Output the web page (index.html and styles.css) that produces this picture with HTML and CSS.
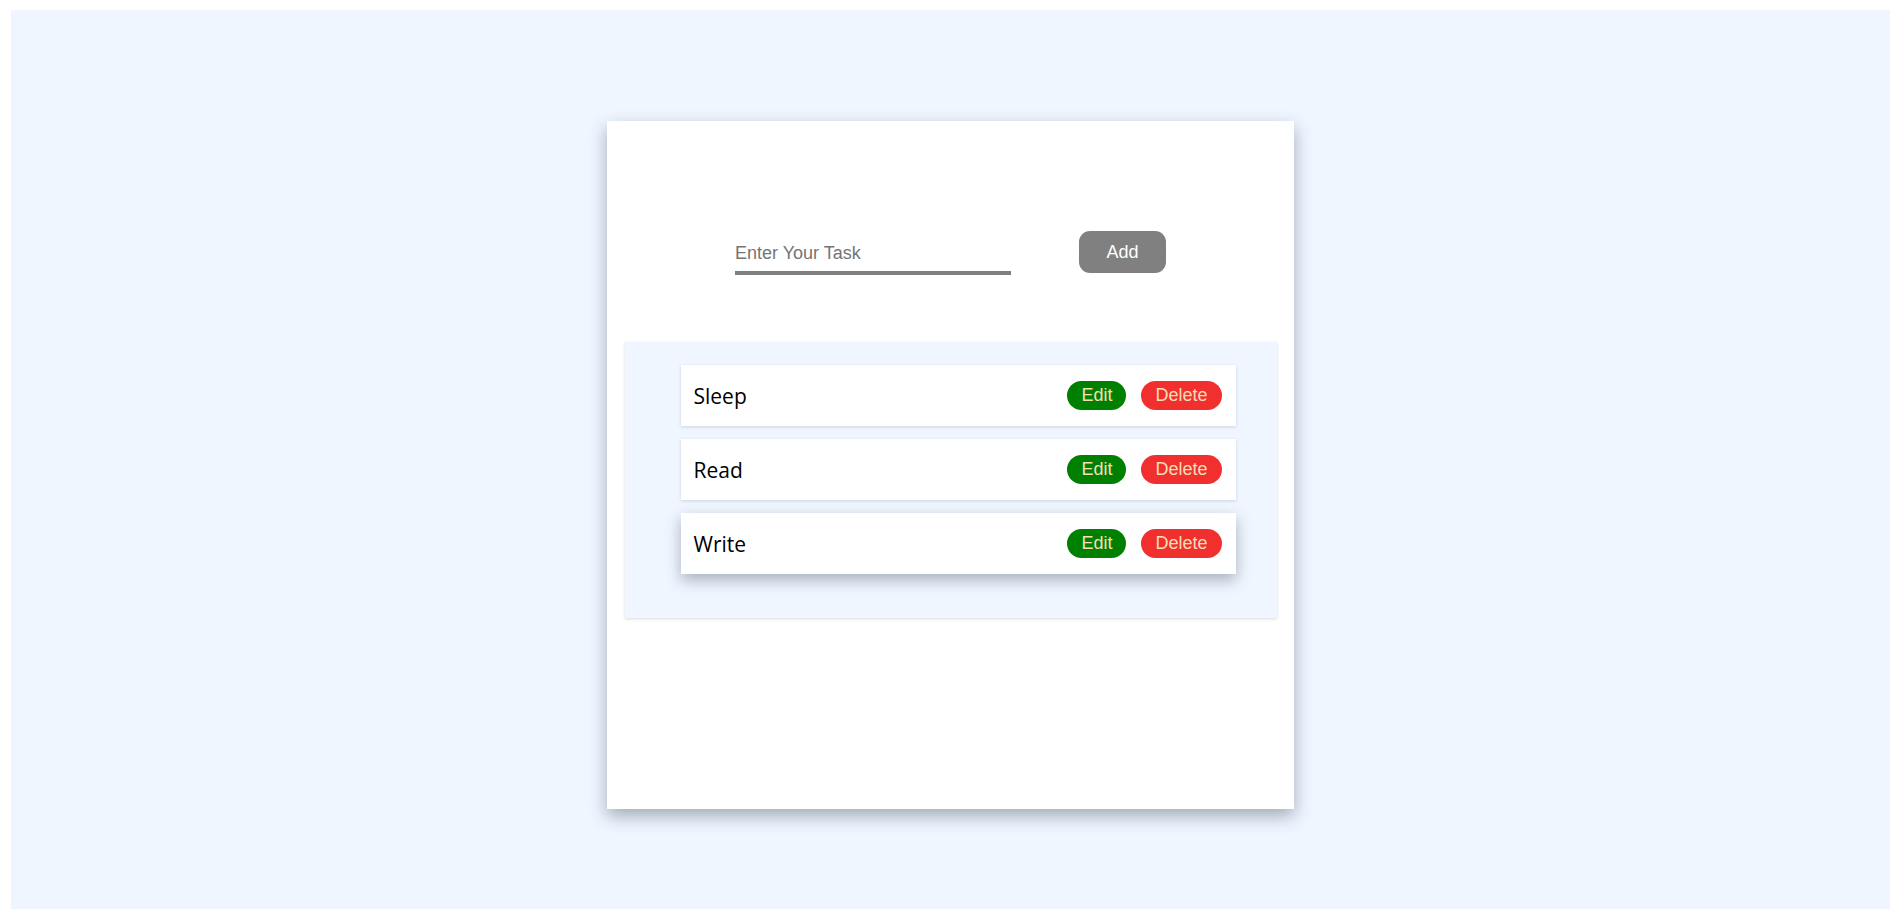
FILE: index.html
```html
<!DOCTYPE html>
<html lang="en">
<head>
<meta charset="utf-8">
<title>Todo</title>
<link rel="stylesheet" href="styles.css">
</head>
<body>
<div class="page">
  <div class="card">
    <div class="form-row">
      <input class="task-input" type="text" placeholder="Enter Your Task">
      <button class="add-btn">Add</button>
    </div>
    <ul class="list">
      <li class="item"><span class="item-text">Sleep</span><div class="actions"><button class="btn edit">Edit</button><button class="btn delete">Delete</button></div></li>
      <li class="item"><span class="item-text">Read</span><div class="actions"><button class="btn edit">Edit</button><button class="btn delete">Delete</button></div></li>
      <li class="item item-hover"><span class="item-text">Write</span><div class="actions"><button class="btn edit">Edit</button><button class="btn delete">Delete</button></div></li>
    </ul>
  </div>
</div>
</body>
</html>
```

FILE: styles.css
```css
html, body {
  margin: 0;
  padding: 0;
  background: #ffffff;
  overflow: hidden;
  height: 909px;
}

.page {
  margin: 10px 7px 0 11px;
  height: 920px;
  background: #eff6ff;
  padding-top: 111px;
  box-sizing: border-box;
}

.card {
  width: 687px;
  height: 688px;
  margin: 0 auto;
  background: #ffffff;
  box-shadow: 0 7px 16px rgba(40, 50, 70, 0.38);
  padding-top: 110px;
  box-sizing: border-box;
  display: flex;
  flex-direction: column;
  align-items: center;
}

.form-row {
  display: flex;
  align-items: center;
  gap: 68px;
  height: 42px;
}

.task-input {
  width: 276px;
  height: 45px;
  box-sizing: border-box;
  border: none;
  border-bottom: 4px solid #808080;
  outline: none;
  padding: 6px 0 0 0;
  margin: 0;
  font-family: "Liberation Sans", Arial, sans-serif;
  font-size: 18px;
  color: #333;
  background: transparent;
}

.task-input::placeholder {
  color: #757575;
}

.add-btn {
  width: 87px;
  height: 42px;
  border: none;
  border-radius: 11px;
  background: #808080;
  color: #ffffff;
  font-family: "Liberation Sans", Arial, sans-serif;
  font-size: 18px;
  padding: 0;
}

.list {
  list-style: none;
  margin: 69px 0 0 0;
  width: 652px;
  box-sizing: border-box;
  padding: 23px 41px 44px 56px;
  background: #eff6ff;
  box-shadow: 0 1px 3px rgba(0, 0, 0, 0.15);
  display: flex;
  flex-direction: column;
  gap: 13px;
}

.item {
  height: 61px;
  background: #ffffff;
  display: flex;
  align-items: center;
  justify-content: space-between;
  padding: 0 14px 0 13px;
  box-shadow: 0 1px 3px rgba(40, 50, 80, 0.18);
}

.item-hover {
  box-shadow: 0 6px 14px rgba(40, 50, 70, 0.35);
}

.item-text {
  font-family: "Open Sans", "Noto Sans", sans-serif;
  font-size: 21px;
  color: #000000;
}

.actions {
  display: flex;
  gap: 15px;
}

.btn {
  height: 29px;
  padding: 0 14px;
  border: none;
  border-radius: 15px;
  font-family: "Liberation Sans", Arial, sans-serif;
  font-size: 18px;
  color: #f5deb3;
}

.edit {
  background: #008000;
}

.delete {
  background: #f22f2f;
}
```
